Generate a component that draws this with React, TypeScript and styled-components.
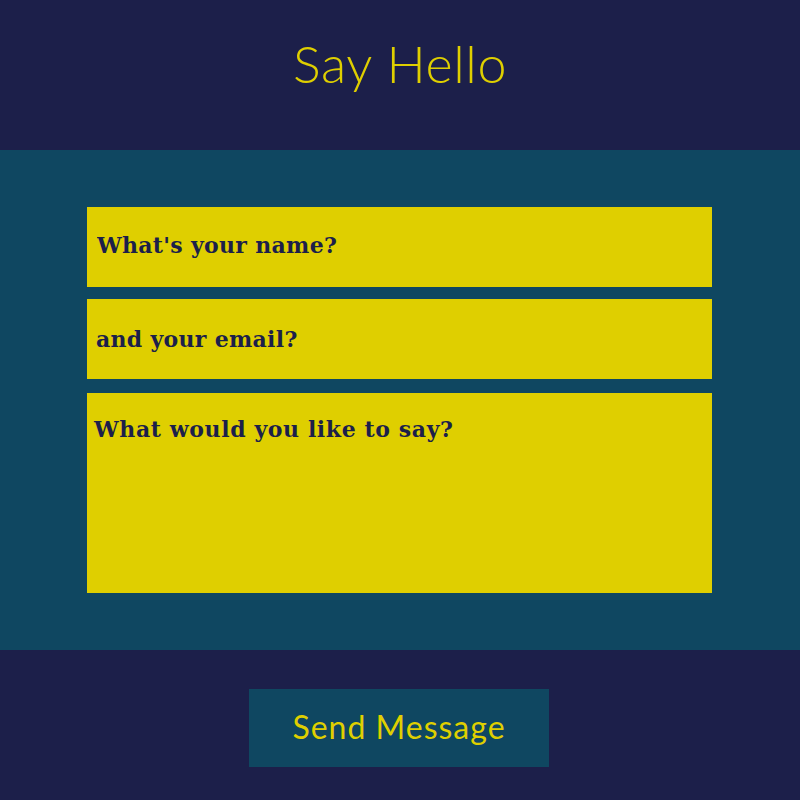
import React from "react";
import styled, { createGlobalStyle } from "styled-components";

const navy = "#1c1f4a";
const teal = "#0f4761";
const yellow = "#dfcf00";

const Global = createGlobalStyle`
  html, body { margin: 0; padding: 0; background: ${navy}; }
  * { box-sizing: border-box; }
`;

const Page = styled.div`
  width: 800px;
  height: 800px;
  display: flex;
  flex-direction: column;
  background: ${navy};
`;

const Header = styled.header`
  height: 150px;
  display: flex;
  justify-content: center;
  padding-top: 37px;
`;

const Title = styled.h1`
  margin: 0;
  font-family: "Lato", "Open Sans", sans-serif;
  font-weight: 300;
  font-size: 52px;
  line-height: 1;
  color: ${yellow};
  letter-spacing: 0.6px;
`;

const FormSection = styled.form`
  height: 500px;
  background: ${teal};
  display: flex;
  flex-direction: column;
  align-items: flex-start;
  padding: 57px 0 0 87px;
`;

const fieldFont = `
  font-family: "DejaVu Serif", "Liberation Serif", serif;
  font-weight: bold;
  font-size: 22px;
  letter-spacing: 0.3px;
`;

const Field = styled.input<{ $mt?: number; $pl?: number }>`
  width: 625px;
  height: 80px;
  border: none;
  outline: none;
  margin-top: ${(p) => p.$mt ?? 0}px;
  padding: 0 0 ${(p) => (p.$mt ? 1 : 4)}px ${(p) => p.$pl ?? 10}px;
  background: ${yellow};
  color: ${navy};
  ${fieldFont}
  &::placeholder { color: ${navy}; opacity: 1; }
`;

const Message = styled.textarea`
  width: 625px;
  height: 200px;
  margin-top: 14px;
  border: none;
  outline: none;
  resize: none;
  padding: 23px 0 0 7px;
  background: ${yellow};
  color: ${navy};
  ${fieldFont}
  letter-spacing: 0.6px;
  &::placeholder { color: ${navy}; opacity: 1; }
`;

const Footer = styled.footer`
  flex: 1;
  display: flex;
  justify-content: flex-start;
  padding: 39px 0 0 249px;
`;

const SendButton = styled.button`
  width: 300px;
  height: 78px;
  border: none;
  background: ${teal};
  color: ${yellow};
  font-family: "Lato", "Open Sans", sans-serif;
  font-weight: 400;
  font-size: 32px;
  letter-spacing: 1px;
  padding: 0 0 4px;
  cursor: pointer;
`;

export default function App() {
  return (
    <Page>
      <Global />
      <Header>
        <Title>Say Hello</Title>
      </Header>
      <FormSection onSubmit={(e) => e.preventDefault()}>
        <Field placeholder="What's your name?" />
        <Field $mt={12} $pl={9} placeholder="and your email?" />
        <Message placeholder="What would you like to say?" />
      </FormSection>
      <Footer>
        <SendButton type="submit">Send Message</SendButton>
      </Footer>
    </Page>
  );
}
